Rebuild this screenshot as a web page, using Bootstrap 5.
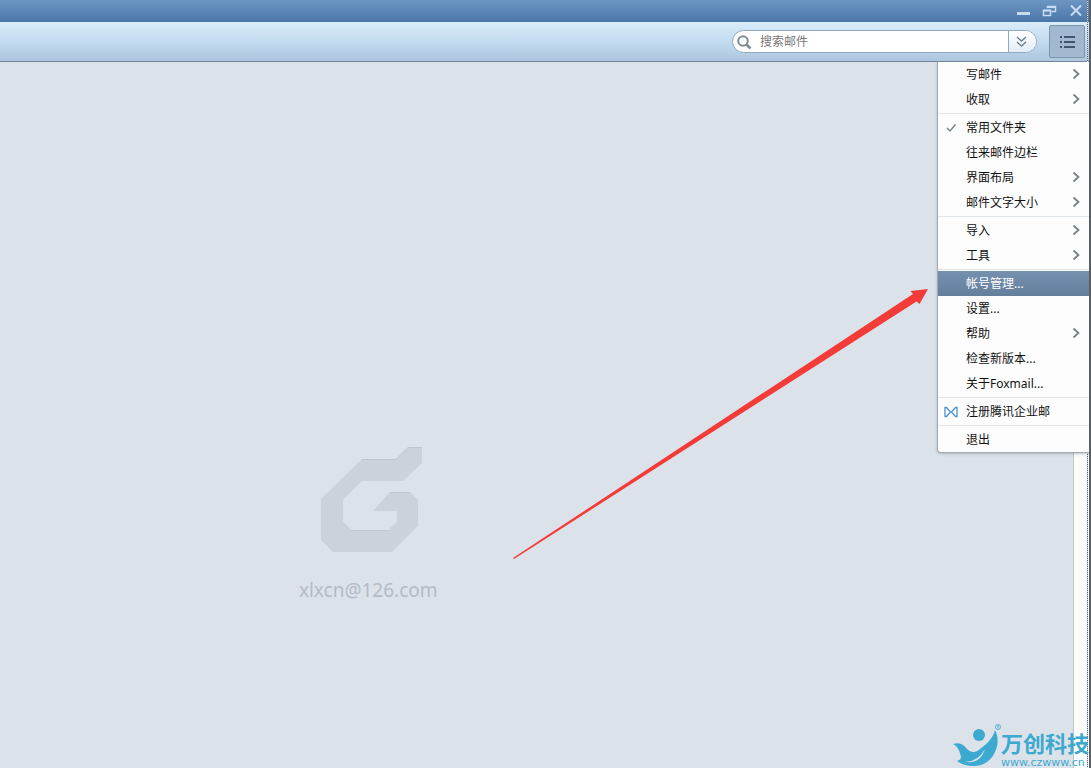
<!DOCTYPE html>
<html lang="zh-CN">
<head>
<meta charset="utf-8">
<meta name="viewport" content="width=device-width, initial-scale=1">
<title>Foxmail</title>
<link href="https://cdn.jsdelivr.net/npm/bootstrap@5.3.0/dist/css/bootstrap.min.css" rel="stylesheet">
<style>
  body { font-family: "Noto Sans", "Noto Sans CJK SC", sans-serif; font-size: 12px; color: #111; background: #dce2e9; }
  svg { display: block; }
  .title-bar { height: 22px; background: linear-gradient(#6c96c2, #4a76a8); }
  .win-btn { width: 26px; height: 22px; color: #c8dcf0; }
  .tool-bar { height: 40px; background: linear-gradient(#d9edfb, #c5ddf1 45%, #adc6de); border-bottom: 1px solid #71869a; padding-right: 4px; gap: 12px; }
  .search-box { width: 305px; height: 23px; background: #fff; border: 1px solid #8fa9c0; border-radius: 12px; overflow: hidden; }
  .search-box input { font-size: 12px; line-height: 16px; color: #555; background: transparent; box-shadow: none !important; }
  .search-box input::placeholder { color: #777; opacity: 1; }
  .search-more { width: 27px; background: linear-gradient(#fff, #e3edf7); box-shadow: -1px 0 #8fa9c0; }
  .menu-btn { width: 36px; height: 33px; border: 1px solid #7c94ac; border-radius: 2px; background: linear-gradient(#a0b8d0, #a3bad0); }
  .app-menu { display: block; top: 40px; right: 0; width: 151px; min-width: 0; padding: 0; font-size: 12px; border: 0; border-radius: 0 0 0 3px; background: #fdfdfe; box-shadow: 0 0 0 1px #a2abb4, 0 1px 3px 1px rgba(60, 75, 90, .3); clip-path: inset(0 0 -5px -5px); }
  .app-menu .dropdown-item { height: 25px; padding: 0 9px 0 0; line-height: 25px; color: #111; }
  .app-menu .dropdown-item.active { background: linear-gradient(#7691b0, #647f9c); color: #fff; }
  .app-menu .dropdown-divider { margin: 1px 0; border-top: 1px solid #dfe4e9; opacity: 1; }
  .item-mark { width: 28px; padding-left: 6px; flex: none; }
  .account-pane { width: 68%; padding-top: 385px; color: #b3bbc7; font-size: 19px; line-height: 28px; gap: 24px; }
  .side-strip { width: 16px; background: #fbfcfc; border-left: 1px solid #bcc9c8; }
  .dot-edge { width: 1px; background: repeating-linear-gradient(#46617f 0 1px, #e2eaf2 1px 2px); right: 3px; z-index: 1; }
  .dark-edge { width: 2px; background: #5a5f64; }
  .pointer-arrow { left: 513px; top: 288px; pointer-events: none; }
  .brand-mark { right: 0; bottom: 0; width: 140px; height: 46px; overflow: hidden; color: #3ba9d0; z-index: 2; }
  .brand-name { font-family: "Noto Sans CJK SC", sans-serif; font-size: 22px; font-weight: 700; line-height: 24px; }
  .brand-site { font-family: "DejaVu Sans", sans-serif; font-size: 11px; line-height: 12px; padding-top: 3px; }
</style>
</head>
<body>
<div class="d-flex vh-100 position-relative overflow-hidden">
  <div class="d-flex flex-column flex-grow-1">
    <header class="title-bar d-flex justify-content-end flex-shrink-0">
      <button class="win-btn btn p-0 border-0" type="button" aria-label="最小化"><svg width="26" height="22"><path d="M6 12h13v3H6z" fill="currentColor"/></svg></button>
      <button class="win-btn btn p-0 border-0" type="button" aria-label="还原"><svg width="26" height="22" fill="none" stroke="currentColor" stroke-width="2"><path d="M10.500 8V6.500h8v5h-4M6.500 10.500h7v5h-7z" stroke-width="1.500"/><path d="M10 7h9M6 10.500h8"/></svg></button>
      <button class="win-btn btn p-0 border-0" type="button" aria-label="关闭"><svg width="26" height="22" fill="none" stroke="currentColor" stroke-width="2"><path d="M8 5.500l10 10M18 5.500l-10 10"/></svg></button>
    </header>

    <div class="tool-bar d-flex align-items-center justify-content-end flex-shrink-0 position-relative">
      <form class="search-box d-flex align-items-stretch">
        <label class="d-flex align-items-center ps-1" for="q" aria-label="搜索"><svg width="15" height="16" fill="none" stroke="#7d8a97" stroke-width="2"><circle cx="6" cy="7" r="4.800"/><path d="M9.500 10.500l4 4" stroke-width="2.500"/></svg></label>
        <input id="q" class="form-control border-0 py-0 ps-2 pe-0" type="text" placeholder="搜索邮件">
        <button class="search-more btn p-0 border-0 rounded-0 flex-shrink-0" type="button" aria-label="搜索选项"><svg width="26" height="21" fill="none" stroke="#71808f" stroke-width="1.400"><path d="M8 6l4.500 4L17 6M8 11l4.500 4 4.500-4"/></svg></button>
      </form>
      <button class="menu-btn btn p-0 d-flex align-items-center justify-content-center" type="button" aria-label="菜单" aria-expanded="true"><svg width="15" height="13" fill="#42566e"><path d="M0 1h2v2H0zM4 1h11v2H4zM0 6h2v2H0zM4 6h11v2H4zM0 11h2v2H0zM4 11h11v2H4z"/></svg></button>

      <div class="app-menu dropdown-menu">
        <a class="dropdown-item d-flex align-items-center" href="#"><span class="item-mark"></span><span class="flex-grow-1">写邮件</span><svg width="8" height="13"><use href="#more"/></svg></a>
        <a class="dropdown-item d-flex align-items-center" href="#"><span class="item-mark"></span><span class="flex-grow-1">收取</span><svg width="8" height="13"><use href="#more"/></svg></a>
        <hr class="dropdown-divider">
        <a class="dropdown-item d-flex align-items-center" href="#"><span class="item-mark"><svg width="13" height="10" fill="none" stroke="#7b848d" stroke-width="1.500"><path d="M3 5l3 3 5.500-6.500"/></svg></span><span class="flex-grow-1">常用文件夹</span></a>
        <a class="dropdown-item d-flex align-items-center" href="#"><span class="item-mark"></span><span class="flex-grow-1">往来邮件边栏</span></a>
        <a class="dropdown-item d-flex align-items-center" href="#"><span class="item-mark"></span><span class="flex-grow-1">界面布局</span><svg width="8" height="13"><use href="#more"/></svg></a>
        <a class="dropdown-item d-flex align-items-center" href="#"><span class="item-mark"></span><span class="flex-grow-1">邮件文字大小</span><svg width="8" height="13"><use href="#more"/></svg></a>
        <hr class="dropdown-divider">
        <a class="dropdown-item d-flex align-items-center" href="#"><span class="item-mark"></span><span class="flex-grow-1">导入</span><svg width="8" height="13"><use href="#more"/></svg></a>
        <a class="dropdown-item d-flex align-items-center" href="#"><span class="item-mark"></span><span class="flex-grow-1">工具</span><svg width="8" height="13"><use href="#more"/></svg></a>
        <hr class="dropdown-divider">
        <a class="dropdown-item active d-flex align-items-center" href="#"><span class="item-mark"></span><span class="flex-grow-1">帐号管理...</span></a>
        <a class="dropdown-item d-flex align-items-center" href="#"><span class="item-mark"></span><span class="flex-grow-1">设置...</span></a>
        <a class="dropdown-item d-flex align-items-center" href="#"><span class="item-mark"></span><span class="flex-grow-1">帮助</span><svg width="8" height="13"><use href="#more"/></svg></a>
        <a class="dropdown-item d-flex align-items-center" href="#"><span class="item-mark"></span><span class="flex-grow-1">检查新版本...</span></a>
        <a class="dropdown-item d-flex align-items-center" href="#"><span class="item-mark"></span><span class="flex-grow-1">关于Foxmail...</span></a>
        <hr class="dropdown-divider">
        <a class="dropdown-item d-flex align-items-center" href="#"><span class="item-mark"><svg width="14" height="12" fill="none" stroke="#4a92cf" stroke-width="1.300" stroke-linejoin="round"><path d="M1 1.500h1.500l4 4.500-4 4.500H1z"/><path d="M13 1.500h-1.500L7.500 6l4 4.500H13z"/></svg></span><span class="flex-grow-1">注册腾讯企业邮</span></a>
        <hr class="dropdown-divider">
        <a class="dropdown-item d-flex align-items-center" href="#"><span class="item-mark"></span><span class="flex-grow-1">退出</span></a>
      </div>
    </div>

    <main class="d-flex flex-grow-1">
      <section class="account-pane d-flex flex-column align-items-center pe-1">
        <svg class="ms-2" width="102" height="105" viewBox="0 0 102 105"><path fill="#ccd2dc" fill-rule="evenodd" d="M87 0H101V16L82 34H41L22 53V74L30 83H67L76 75V64H52L69 45H89L97 53V79L71 105H12L0 93V52L41 12H75Z"/><path fill="none" stroke="#bfc6d1" d="M87 .5H101M41 12.500H75L87 .5M30 83.500H67M69 45.500H89"/></svg>
        <div>xlxcn@126.com</div>
      </section>
      <aside class="side-strip ms-auto"></aside>
    </main>
  </div>

  <div class="dot-edge position-absolute top-0 bottom-0"></div>
  <div class="dark-edge flex-shrink-0"></div>

  <svg class="pointer-arrow position-absolute" width="416" height="272" fill="#f33b38"><path d="M0 270L400 6l-2.500-3L415 1l-8.500 15-3-2.500L1 271z"/></svg>

  <div class="brand-mark position-absolute d-flex">
    <svg class="flex-shrink-0 overflow-visible" width="50" height="46" fill="currentColor"><circle cx="28" cy="13" r="6"/><path d="M2 22c7-2 10 0 14 5 4 4 9 4 13 0C36 22 42 16 44 8c4 8 3 16 0 22-4 9-12 14-21 14-7 0-13-2-17-5 3-1 4-2 4-4C9 30 7 24 2 22z"/><path d="M13 39.500Q26 41 34 27Q29 43 13 39.500z" fill="#dce2e9"/><circle cx="47" cy="5" r="2.500" fill="none" stroke="currentColor" stroke-width=".8"/><path d="M46.500 3.500h1.500v1h-.7v2h-.8z"/></svg>
    <div class="pt-2 text-nowrap flex-shrink-0">
      <div class="brand-name">万创科技</div>
      <div class="brand-site">www.czwww.cn</div>
    </div>
  </div>
</div>

<svg class="d-none" aria-hidden="true"><symbol id="more" viewBox="0 0 8 13"><path d="M1.500 1.500L6.500 6l-5 4.500" fill="none" stroke="#747d86" stroke-width="1.700"/></symbol></svg>
<script src="https://cdn.jsdelivr.net/npm/bootstrap@5.3.0/dist/js/bootstrap.bundle.min.js"></script>
</body>
</html>
